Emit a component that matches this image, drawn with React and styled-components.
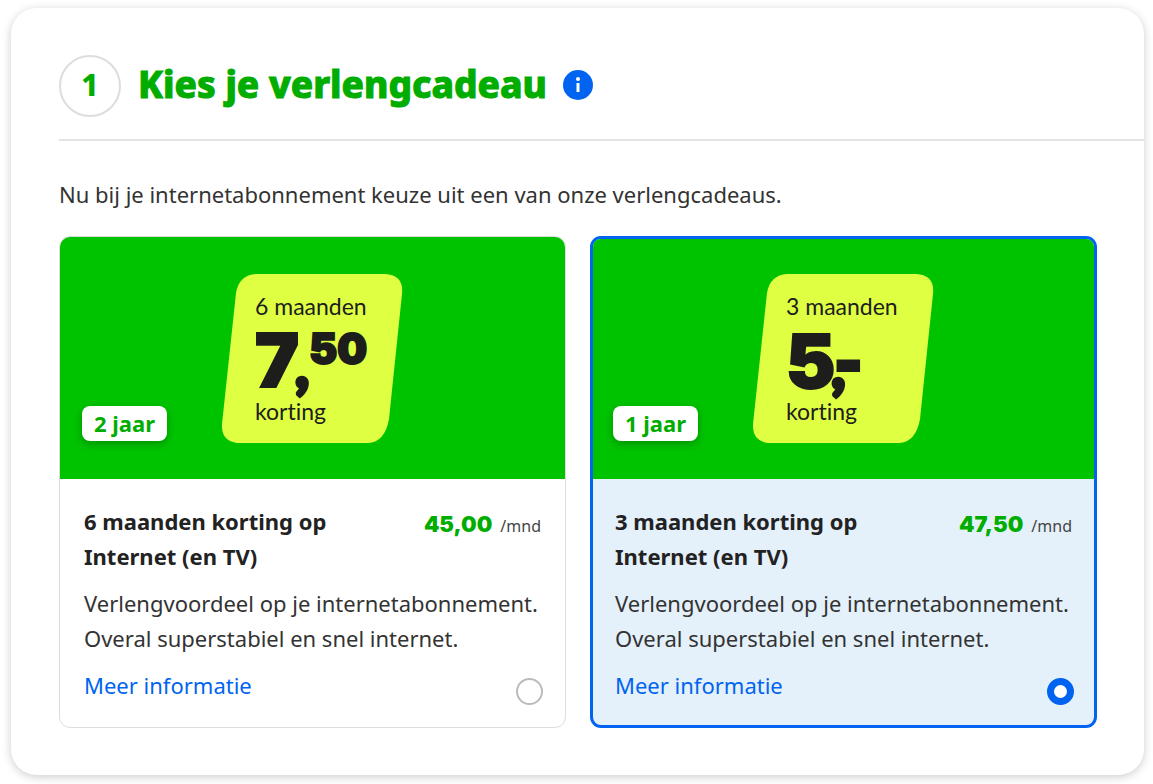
import React, { useState } from 'react';
import styled, { createGlobalStyle, css } from 'styled-components';

const GlobalStyle = createGlobalStyle`
  *, *::before, *::after { box-sizing: border-box; }
  body {
    margin: 0;
    background: #fff;
    color: #333;
    font: 400 22px/35px 'Noto Sans', 'Open Sans', sans-serif;
  }
  h1, h2, p, fieldset { margin: 0; }
`;

const Page = styled.main`
  padding: 8px 9px 9px 11px;
`;

const Panel = styled.section`
  padding: 47px 0 47px 48px;
  border-radius: 26px;
  background: #fff;
  box-shadow: 0 2px 10px rgba(0, 0, 0, 0.2);
`;

const Header = styled.header`
  display: flex;
  align-items: center;
  height: 86px;
  padding-bottom: 22px;
  border-bottom: 2px solid #e3e3e3;
`;

const Step = styled.span`
  display: grid;
  place-items: center;
  width: 62px;
  height: 62px;
  margin-right: 17px;
  padding-bottom: 4px;
  border: 2px solid #ddd;
  border-radius: 50%;
  color: #00ad00;
  font: 800 30px/56px 'Noto Sans', sans-serif;
`;

const Title = styled.h1`
  padding-bottom: 4px;
  color: #00ad00;
  font: 800 37px/56px 'Noto Sans', sans-serif;
  -webkit-text-stroke: 1px currentColor;
`;

const InfoButton = styled.button`
  display: flex;
  margin: 0 0 2px 16px;
  padding: 0;
  border: 0;
  border-radius: 50%;
  background: none;
  cursor: pointer;
`;

const Body = styled.div`
  padding-right: 47px;
`;

const Intro = styled.p`
  padding: 36px 0 24px;
`;

const Options = styled.fieldset`
  display: grid;
  grid-template-columns: repeat(auto-fit, minmax(420px, 1fr));
  gap: 24px;
  padding: 0;
  border: 0;
`;

const Card = styled.article`
  overflow: hidden;
  border-radius: 11px;
  background: ${({ $selected }) => ($selected ? '#e4f0fa' : '#fff')};
  ${({ $selected }) =>
    $selected
      ? css`
          border: 3px solid #0064f0;
          --edge: 3px;
        `
      : css`
          border: 1px solid #ddd;
          --edge: 1px;
        `}
`;

const Hero = styled.div`
  position: relative;
  display: flex;
  justify-content: center;
  height: calc(243px - var(--edge));
  padding-top: calc(38px - var(--edge));
  background: #00c300;
`;

const Duration = styled.span`
  position: absolute;
  left: calc(23px - var(--edge));
  bottom: 38px;
  padding: 0 12px;
  border-radius: 8px;
  background: #fff;
  box-shadow: 0 3px 8px rgba(0, 0, 0, 0.25);
  color: #00ad00;
  font-weight: 700;
`;

const Tag = styled.div`
  position: relative;
  width: 181px;
  height: 169px;
  padding: 16px 0 0 33px;
  color: #1d1d1b;
  font: 400 23px/32px Lato, sans-serif;
  font-variant-ligatures: none;
`;

const TagShape = styled.svg`
  position: absolute;
  inset: 0;
`;

const TagText = styled.p`
  position: relative;
`;

const Amount = styled.p`
  position: relative;
  display: flex;
  align-items: baseline;
  height: 73px;
  font: 900 74px/76px Inter, sans-serif;
  -webkit-text-stroke: 2px currentColor;
`;

const Comma = styled.span`
  margin-left: -4px;
  font-family: Lato, sans-serif;
  font-size: 60px;
  -webkit-text-stroke-width: 4px;
`;

const Cents = styled.sup`
  align-self: flex-start;
  font-size: 42px;
  line-height: 54px;
`;

const Dash = styled.span`
  margin-left: -11px;
  font-family: Lato, sans-serif;
  -webkit-text-stroke-width: 4px;
`;

const Details = styled.div`
  display: grid;
  gap: 12px;
  padding: 25px calc(25px - var(--edge)) calc(23px - var(--edge));
`;

const Row = styled.div`
  display: flex;
  justify-content: space-between;
  align-items: flex-start;
  gap: 24px;
`;

const CardTitle = styled.label`
  flex: 1;
  color: #222;
  font-weight: 700;
  cursor: pointer;
`;

const Price = styled.p`
  color: #00ad00;
  font: 900 22px/40px Inter, sans-serif;
  white-space: nowrap;
`;

const Period = styled.span`
  margin-left: 8px;
  color: #444;
  font: 400 16px 'Noto Sans', sans-serif;
`;

const MoreLink = styled.a`
  color: #0064f0;
  text-decoration: none;
`;

const Radio = styled.input`
  appearance: none;
  width: 27px;
  height: 27px;
  margin: 10px -2px 0 0;
  border: 2px solid #bbb;
  border-radius: 50%;
  background: #fff;
  cursor: pointer;

  &:checked {
    border: 7px solid #0064f0;
  }
`;

const offers = [
  { id: 'offer-6', months: 6, euros: '7', cents: '50', duration: '2 jaar', price: '45,00' },
  { id: 'offer-3', months: 3, euros: '5', duration: '1 jaar', price: '47,50' },
];

const InfoIcon = () => (
  <svg width="30" height="30" viewBox="0 0 30 30" aria-hidden="true">
    <circle cx="15" cy="15" r="15" fill="#0064f0" />
    <circle cx="15" cy="9" r="2" fill="#fff" />
    <path d="M15 13v9" stroke="#fff" strokeWidth="3" />
  </svg>
);

const Offer = ({ offer, selected, onSelect }) => (
  <Card $selected={selected}>
    <Hero>
      <Tag>
        <TagShape width="181" height="169" viewBox="0 0 181 169" aria-hidden="true">
          <path
            d="M34 0H163Q182 1 180 20L167 145Q163 168 146 169H15Q-1 167 0 150L14 19Q17 1 34 0Z"
            fill="#dfff43"
          />
        </TagShape>
        <TagText>{`${offer.months} maanden`}</TagText>
        <Amount>
          {offer.euros}
          <Comma>,</Comma>
          {offer.cents ? <Cents>{offer.cents}</Cents> : <Dash>-</Dash>}
        </Amount>
        <TagText>korting</TagText>
      </Tag>
      <Duration>{offer.duration}</Duration>
    </Hero>
    <Details>
      <Row>
        <CardTitle htmlFor={offer.id}>{`${offer.months} maanden korting op Internet (en TV)`}</CardTitle>
        <Price>
          {offer.price}
          <Period>/mnd</Period>
        </Price>
      </Row>
      <p>Verlengvoordeel op je internetabonnement. Overal superstabiel en snel internet.</p>
      <Row>
        <MoreLink href="#informatie">Meer informatie</MoreLink>
        <Radio type="radio" name="offer" id={offer.id} checked={selected} onChange={onSelect} />
      </Row>
    </Details>
  </Card>
);

export default function App() {
  const [selected, setSelected] = useState('offer-3');

  return (
    <Page>
      <GlobalStyle />
      <Panel>
        <Header>
          <Step>1</Step>
          <Title>Kies je verlengcadeau</Title>
          <InfoButton type="button" aria-label="Informatie">
            <InfoIcon />
          </InfoButton>
        </Header>
        <Body>
          <Intro>Nu bij je internetabonnement keuze uit een van onze verlengcadeaus.</Intro>
          <Options aria-label="Verlengcadeau">
            {offers.map(offer => (
              <Offer
                key={offer.id}
                offer={offer}
                selected={selected === offer.id}
                onSelect={() => setSelected(offer.id)}
              />
            ))}
          </Options>
        </Body>
      </Panel>
    </Page>
  );
}
